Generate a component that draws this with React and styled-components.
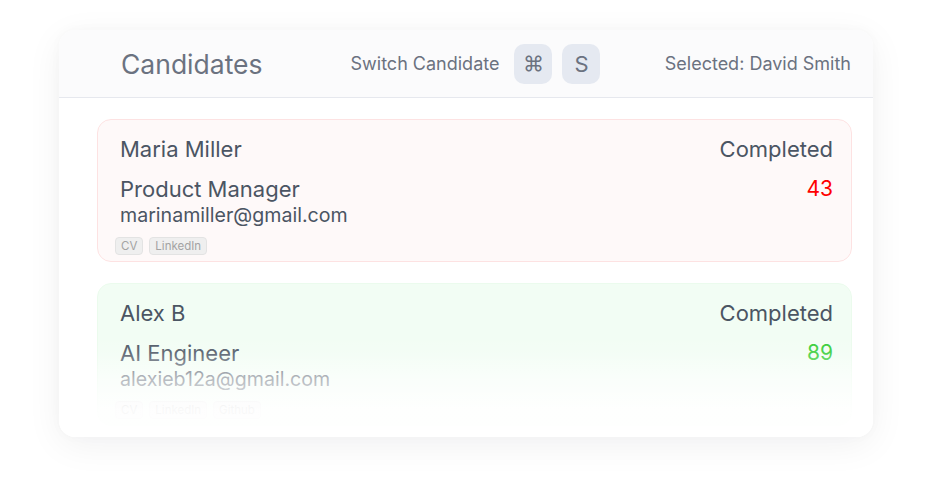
import styled, { createGlobalStyle } from "styled-components";

const GlobalStyle = createGlobalStyle`
  html, body {
    margin: 0;
    padding: 0;
    background: #ffffff;
    font-family: "Inter", "Noto Sans", sans-serif;
  }
`;

const Page = styled.main`
  width: 928px;
  height: 493px;
  padding: 30px 0 0 59px;
  box-sizing: border-box;
`;

const Panel = styled.section`
  position: relative;
  width: 814px;
  height: 407px;
  border-radius: 16px;
  background: #ffffff;
  box-shadow: 0 8px 36px rgba(15, 23, 42, 0.06), 0 0 12px rgba(15, 23, 42, 0.025);
  overflow: hidden;
`;

const Header = styled.header`
  display: flex;
  align-items: center;
  height: 68px;
  padding: 0 22px 0 62px;
  background: #fbfbfc;
  border-bottom: 1px solid #e6e8ee;
  box-sizing: border-box;
`;

const Title = styled.h1`
  margin: 0;
  font-size: 26.5px;
  font-weight: 400;
  color: #6b7280;
`;

const Shortcut = styled.div`
  display: flex;
  align-items: center;
  gap: 10px;
  margin-left: 88px;
  font-size: 18px;
  color: #6b7280;
`;

const Key = styled.span`
  display: inline-flex;
  align-items: center;
  justify-content: center;
  width: 38px;
  height: 40px;
  border-radius: 10px;
  background: #e5e9f1;
  color: #6b7280;
  font-size: ${(p) => (p.$glyph ? "21px" : "22px")};
  &:first-of-type {
    margin-left: 5px;
  }
`;

const Selected = styled.span`
  margin-left: auto;
  font-size: 18px;
  color: #6b7280;
`;

const List = styled.div`
  display: flex;
  flex-direction: column;
  gap: 21px;
  padding: 21px 21px 0 38px;
`;

const Card = styled.article`
  display: flex;
  flex-direction: column;
  height: 143px;
  padding: 16px 18px 0 17px;
  box-sizing: border-box;
  border-radius: 14px;
  border: 1px solid ${(p) => (p.$tone === "red" ? "#fde2e2" : "#ebfbed")};
  background: ${(p) => (p.$tone === "red" ? "#fef9f9" : "#f2fdf4")};
`;

const Row = styled.div`
  display: flex;
  justify-content: space-between;
  align-items: center;
  padding-left: 5px;
  margin-top: ${(p) => p.$gap || 0}px;
  font-size: 22px;
  line-height: 26px;
  color: #4b5563;
`;

const Score = styled.span`
  font-size: 21px;
  color: ${(p) => (p.$tone === "red" ? "#ff0000" : "#33cc33")};
`;

const Email = styled.div`
  padding-left: 5px;
  margin-top: 1px;
  font-size: 19.6px;
  line-height: 24px;
  color: #4b5563;
`;

const Tags = styled.div`
  display: flex;
  gap: 6px;
  margin-top: 10px;
`;

const Tag = styled.span`
  display: inline-flex;
  align-items: center;
  height: 18px;
  padding: 0 5px;
  box-sizing: border-box;
  border-radius: 4px;
  border: 1px solid #e3e3e3;
  background: #efefef;
  color: #a3a3a3;
  font-size: 11.5px;
`;

const Fade = styled.div`
  position: absolute;
  left: 0;
  right: 0;
  bottom: 0;
  height: 100px;
  background: linear-gradient(
    to bottom,
    rgba(255, 255, 255, 0) 0%,
    rgba(255, 255, 255, 0.14) 16%,
    rgba(255, 255, 255, 0.58) 41%,
    rgba(255, 255, 255, 0.92) 72%,
    rgba(255, 255, 255, 0.97) 100%
  );
  pointer-events: none;
`;

const candidates = [
  {
    name: "Maria Miller",
    role: "Product Manager",
    email: "marinamiller@gmail.com",
    score: 43,
    tone: "red",
    tags: ["CV", "LinkedIn"],
  },
  {
    name: "Alex B",
    role: "AI Engineer",
    email: "alexieb12a@gmail.com",
    score: 89,
    tone: "green",
    tags: ["CV", "LinkedIn", "Github"],
  },
];

const App = () => {
  return (
    <Page>
      <GlobalStyle />
      <Panel>
        <Header>
          <Title>Candidates</Title>
          <Shortcut>
            Switch Candidate
            <Key $glyph>⌘</Key>
            <Key>S</Key>
          </Shortcut>
          <Selected>Selected: David Smith</Selected>
        </Header>
        <List>
          {candidates.map((c) => (
            <Card key={c.email} $tone={c.tone}>
              <Row>
                <span>{c.name}</span>
                <span>Completed</span>
              </Row>
              <Row $gap={14}>
                <span>{c.role}</span>
                <Score $tone={c.tone}>{c.score}</Score>
              </Row>
              <Email>{c.email}</Email>
              <Tags>
                {c.tags.map((t) => (
                  <Tag key={t}>{t}</Tag>
                ))}
              </Tags>
            </Card>
          ))}
        </List>
        <Fade />
      </Panel>
    </Page>
  );
};

export default App;
